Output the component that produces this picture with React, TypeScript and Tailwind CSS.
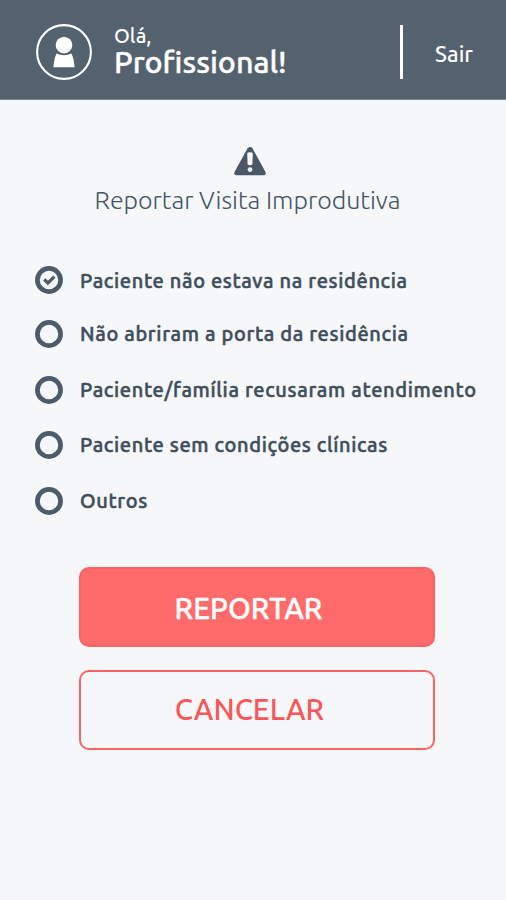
import { useState } from "react";

const reasons = [
  { label: "Paciente não estava na residência", row: "mb-[26px]", text: "pt-px" },
  { label: "Não abriram a porta da residência", row: "mb-[28px]", text: "" },
  { label: "Paciente/família recusaram atendimento", row: "mb-[27px]", text: "" },
  { label: "Paciente sem condições clínicas", row: "mb-[28px]", text: "" },
  { label: "Outros", row: "", text: "" },
];

function UserIcon() {
  return (
    <svg className="h-14 w-14 shrink-0" viewBox="0 0 56 56" fill="none">
      <circle cx="28" cy="28" r="26.9" stroke="#fff" strokeWidth="2.1" />
      <circle cx="28" cy="21.2" r="8.3" fill="#fff" />
      <path d="M20.6 29.6Q28 32.8 35.4 29.6Q37.8 34 38.6 43.2H17.4Q18.2 34 20.6 29.6Z" fill="#fff" />
    </svg>
  );
}

function WarningIcon() {
  return (
    <svg className="h-[29px] w-[34px]" viewBox="0 0 34 29">
      <path
        d="M14.6 1.2Q17 -1.2 19.4 1.2L32.2 24.4Q33.8 27.8 30.8 28.2H3.2Q.2 27.8 1.8 24.4Z"
        fill="#4a5766"
      />
      <path d="M14.2 6.4Q14.2 5.2 17 5.2T19.8 6.4L19.4 17.6Q17 19 14.6 17.6Z" fill="#f5f7f9" />
      <circle cx="17" cy="22.6" r="2.4" fill="#f5f7f9" />
    </svg>
  );
}

function Radio({ checked }: { checked: boolean }) {
  return (
    <svg className="h-7 w-7 shrink-0" viewBox="0 0 28 28" fill="none" stroke="#4d5a69">
      <circle cx="14" cy="14" r="11.6" strokeWidth="4.7" />
      {checked && <path d="M9.2 13.3L12.9 17L19.4 10.6" strokeWidth="3.2" />}
    </svg>
  );
}

export default function App() {
  const [selected, setSelected] = useState(0);
  return (
    <div className="flex h-[900px] w-[506px] flex-col overflow-hidden bg-[#f5f7f9] font-['Ubuntu','Noto_Sans',sans-serif]">
      <header className="flex h-[100px] shrink-0 items-center border-b border-[#7d8790] bg-[#54616e] pt-[5px] pl-9 text-white">
        <UserIcon />
        <div className="ml-[22px] w-[285.5px] pb-[3px] whitespace-nowrap">
          <div className="text-[20.3px] leading-[24px] font-medium">Olá,</div>
          <div className="text-[30.5px] leading-[29px] font-medium [-webkit-text-stroke:0.4px]">Profissional!</div>
        </div>
        <div className="h-[54px] w-[3px] shrink-0 bg-white" />
        <button className="ml-[32.5px] pt-[3px] text-[22px] leading-6 font-medium">Sair</button>
      </header>

      <main className="flex flex-col pt-[47px]">
        <div className="flex w-[499px] flex-col items-center">
          <WarningIcon />
          <h1 className="mt-2 pr-1 text-[25px] leading-8 font-light whitespace-nowrap text-[#425465]">
            Reportar Visita Improdutiva
          </h1>
        </div>

        <div className="mt-[50px] flex flex-col pl-[35px]">
          {reasons.map((r, i) => (
            <button
              key={r.label}
              onClick={() => setSelected(i)}
              className={`flex h-7 items-center gap-[17px] text-left ${r.row}`}
            >
              <Radio checked={selected === i} />
              <span
                className={`text-[20px] leading-7 font-medium tracking-[0.65px] whitespace-nowrap text-[#3e4e5d] [-webkit-text-stroke:0.5px] ${r.text}`}
              >
                {r.label}
              </span>
            </button>
          ))}
        </div>

        <div className="mt-[52px] ml-[79px] flex w-[356px] flex-col gap-[23px]">
          <button className="flex h-20 items-center justify-center rounded-[10px] border-2 border-[#fb6263] bg-[#ff6a6a] pt-1 pr-[17px] text-[29.2px] font-medium text-white [-webkit-text-stroke:0.4px]">
            REPORTAR
          </button>
          <button className="flex h-20 items-center justify-center rounded-[10px] border-2 border-[#fb6263] pr-[15px] pb-px text-[29.2px] font-medium text-[#fa5557]">
            CANCELAR
          </button>
        </div>
      </main>
    </div>
  );
}
